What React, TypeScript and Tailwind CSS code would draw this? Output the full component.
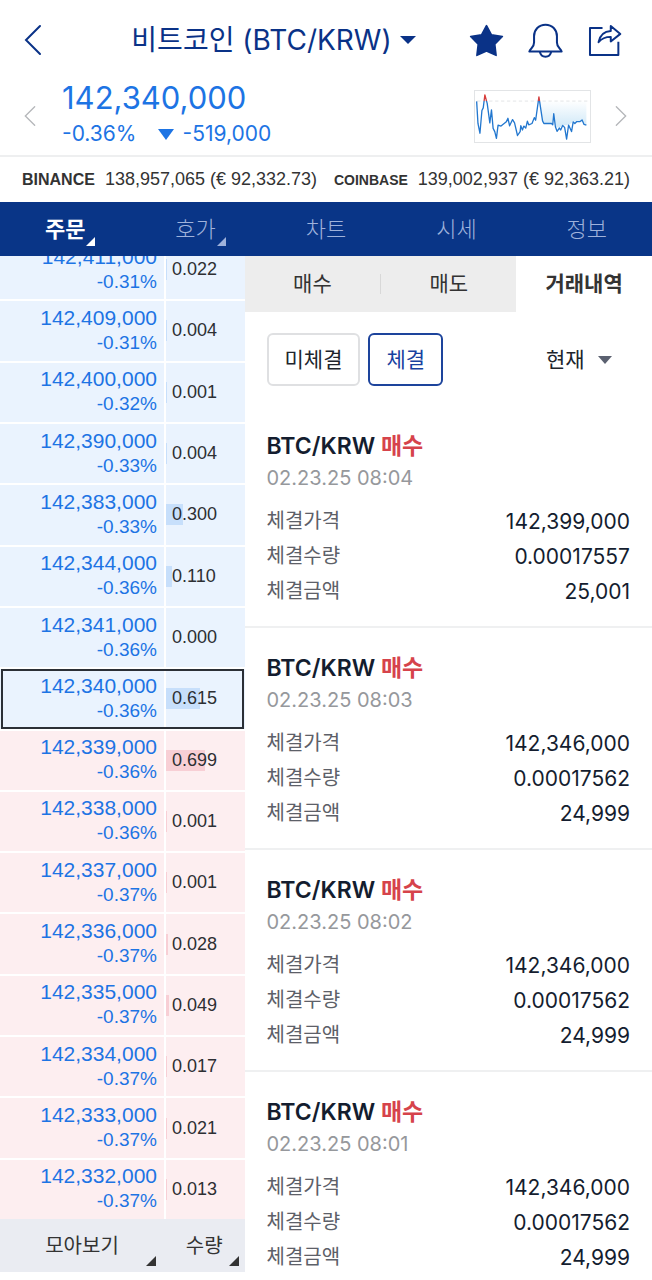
import React from 'react';
import clsx from 'clsx';

interface BookRow {
  price: string;
  change: string;
  qty: string;
  side: 'ask' | 'bid';
  current?: boolean;
}

const BOOK: BookRow[] = [
  { price: '142,411,000', change: '-0.31%', qty: '0.022', side: 'ask' },
  { price: '142,409,000', change: '-0.31%', qty: '0.004', side: 'ask' },
  { price: '142,400,000', change: '-0.32%', qty: '0.001', side: 'ask' },
  { price: '142,390,000', change: '-0.33%', qty: '0.004', side: 'ask' },
  { price: '142,383,000', change: '-0.33%', qty: '0.300', side: 'ask' },
  { price: '142,344,000', change: '-0.36%', qty: '0.110', side: 'ask' },
  { price: '142,341,000', change: '-0.36%', qty: '0.000', side: 'ask' },
  { price: '142,340,000', change: '-0.36%', qty: '0.615', side: 'ask', current: true },
  { price: '142,339,000', change: '-0.36%', qty: '0.699', side: 'bid' },
  { price: '142,338,000', change: '-0.36%', qty: '0.001', side: 'bid' },
  { price: '142,337,000', change: '-0.37%', qty: '0.001', side: 'bid' },
  { price: '142,336,000', change: '-0.37%', qty: '0.028', side: 'bid' },
  { price: '142,335,000', change: '-0.37%', qty: '0.049', side: 'bid' },
  { price: '142,334,000', change: '-0.37%', qty: '0.017', side: 'bid' },
  { price: '142,333,000', change: '-0.37%', qty: '0.021', side: 'bid' },
  { price: '142,332,000', change: '-0.37%', qty: '0.013', side: 'bid' },
];

const TRADES = [
  { time: '02.23.25 08:04', price: '142,399,000', amount: '0.00017557', total: '25,001' },
  { time: '02.23.25 08:03', price: '142,346,000', amount: '0.00017562', total: '24,999' },
  { time: '02.23.25 08:02', price: '142,346,000', amount: '0.00017562', total: '24,999' },
  { time: '02.23.25 08:01', price: '142,346,000', amount: '0.00017562', total: '24,999' },
];

const NAV = [
  { label: '주문', active: true, more: true },
  { label: '호가', more: true },
  { label: '차트' },
  { label: '시세' },
  { label: '정보' },
];

const Chevron = ({ flip, className }: { flip?: boolean; className: string }) => (
  <svg viewBox="0 0 18 32" fill="none" stroke="currentColor" strokeLinecap="round" className={className}>
    <path d={flip ? 'M2 2l14 14L2 30' : 'M16 2L2 16l14 14'} />
  </svg>
);

const Caret = ({ className }: { className: string }) => (
  <svg viewBox="0 0 16 8" fill="currentColor" preserveAspectRatio="none" className={className}>
    <path d="M0 0h16L8 8z" />
  </svg>
);

const Corner = ({ className }: { className: string }) => (
  <svg viewBox="0 0 9 9" fill="currentColor" className={clsx('absolute', className)}>
    <path d="M9 0v9H0z" />
  </svg>
);

const StarIcon = () => (
  <svg viewBox="0 0 104 100" fill="currentColor" stroke="currentColor" strokeWidth="5" strokeLinejoin="round" className="h-[33px] w-[35px]">
    <path d="M52 5l15 28 33 5-23 23 4 34-29-13-29 13 4-34L4 38l33-5z" />
  </svg>
);

const BellIcon = () => (
  <svg viewBox="0 0 104 104" fill="none" stroke="currentColor" strokeWidth="6" strokeLinejoin="round" className="size-[35px]">
    <path d="M52 5C32 5 18 20 18 39v19c0 9-3 13-8 18-3 3-5 6-6 9h96c-1-3-3-6-6-9-5-5-8-9-8-18V39C86 20 72 5 52 5z" />
    <path d="M35 85c2 10 8 15 17 15s15-5 17-15" />
  </svg>
);

const ShareIcon = () => (
  <svg viewBox="0 0 104 100" fill="none" stroke="currentColor" strokeWidth="6" strokeLinejoin="round" className="h-[33px] w-[35px]">
    <path d="M46 12H8v82h86V54" />
    <path d="M34 55C38 35 51 22 71 21V6l29 24-29 23V39c-16 0-28 5-37 16z" />
  </svg>
);

const MiniChart = () => (
  <svg viewBox="43 30 349 157" preserveAspectRatio="none" fill="none" className="h-[53px] w-[117px] border border-[#e2e4e6]">
    <defs>
      <linearGradient id="area" x1="0" y1="60" x2="0" y2="135" gradientUnits="userSpaceOnUse">
        <stop offset="0" stopColor="#fff" />
        <stop offset="1" stopColor="#d3eaf8" />
      </linearGradient>
      <linearGradient id="line" x1="0" y1="40" x2="0" y2="180" gradientUnits="userSpaceOnUse">
        <stop offset="0" stopColor="#e0362c" />
        <stop offset="0.15" stopColor="#c9424a" />
        <stop offset="0.16" stopColor="#2277cf" />
        <stop offset="1" stopColor="#2277cf" />
      </linearGradient>
    </defs>
    <path fill="url(#area)" d="M240 62L248 122 252 130 275 130 279 134 282 100 287 140 299 144 309 136 327 135 341 125 362 124 368 119 374 133 381 135V62z" />
    <path stroke="#d5d7da" strokeWidth="2" strokeDasharray="10 8" d="M50 61H384" />
    <path
      stroke="url(#line)"
      strokeWidth="4"
      strokeLinejoin="round"
      d="M48 62L52 130 58 160 64 90 68 82 73 42 80 68 88 128 93 88 98 145 103 155 108 176 113 135 122 138 138 125 143 114 148 137 157 118 163 128 172 167 180 155 182 137 187 150 191 138 197 144 202 123 206 134 216 130 223 112 227 120 237 48 248 122 252 130 275 130 279 134 282 100 287 140 292 154 299 144 303 150 309 136 315 142 321 178 327 135 336 155 341 125 346 130 352 124 362 124 368 119 374 133 381 135"
    />
  </svg>
);

const Header = () => (
  <header>
    <div className="flex h-20 items-center pl-6 pr-[30px] text-[#0a3287]">
      <button aria-label="뒤로">
        <Chevron className="h-8 w-[18px] stroke-2" />
      </button>
      <h1 className="flex-1 pl-9 text-center text-[28px]">
        <button className="inline-flex items-center gap-2">
          비트코인 (BTC/KRW)
          <Caret className="h-2 w-4" />
        </button>
      </h1>
      <div className="flex gap-6">
        <button aria-label="즐겨찾기"><StarIcon /></button>
        <button aria-label="알림"><BellIcon /></button>
        <button aria-label="공유"><ShareIcon /></button>
      </div>
    </div>
    <div className="flex h-[77px] items-center border-b-2 border-[#eeeff0] pr-[25px] pb-[3px] pl-6">
      <button aria-label="이전" className="text-[#b5b7ba]">
        <Chevron className="h-[22px] w-3 stroke-2" />
      </button>
      <div className="ml-[26px] flex-1 text-[#1d74e4]">
        <p className="text-[31px] leading-9">142,340,000</p>
        <p className="flex items-center text-[21px] leading-9">
          -0.36%
          <Caret className="ml-[22px] mr-2 h-[11px] w-4" />
          -519,000
        </p>
      </div>
      <MiniChart />
      <button aria-label="다음" className="ml-6 text-[#b5b7ba]">
        <Chevron flip className="h-[22px] w-3 stroke-2" />
      </button>
    </div>
    <div className="flex h-[45px] items-center justify-between px-[22px] font-['Liberation_Sans',sans-serif] text-[#333]">
      <p className="flex items-center gap-[10px] text-[18px]"><b className="text-base">BINANCE</b> 138,957,065 (€ 92,332.73)</p>
      <p className="flex items-center gap-[10px] text-[18px]"><b className="text-sm">COINBASE</b> 139,002,937 (€ 92,363.21)</p>
    </div>
  </header>
);

const Nav = () => (
  <nav className="grid h-[54px] grid-cols-5 bg-[#093587] text-[22px]">
    {NAV.map(({ label, active, more }) => (
      <button key={label} className={active ? 'font-bold text-white' : 'font-light text-[#9fb2db]'}>
        <span className="relative">
          {label}
          {more && <Corner className="-right-[10px] -bottom-1 size-[9px]" />}
        </span>
      </button>
    ))}
  </nav>
);

const OrderBook = () => (
  <aside className="flex w-3/8 flex-col pb-2">
    <div className="flex min-h-0 flex-1 flex-col overflow-hidden font-['Liberation_Sans',sans-serif]">
      {/* list is scrolled a little, so the first row is cut */}
      <ul className="-mt-[18px] flex flex-1 flex-col">
        {BOOK.map((row) => {
          const ask = row.side === 'ask';
          const qty = Number(row.qty);
          return (
            <li key={row.price} className="relative flex flex-1 gap-[2px] border-t-2 border-white">
              <div className={clsx('flex w-[164px] flex-col justify-center pr-[7px] text-right text-[#1d74e4]', ask ? 'bg-[#eaf3fe]' : 'bg-[#fdeef0]')}>
                <p className="text-[21px] leading-6">{row.price}</p>
                <p className="text-[19px] leading-[26px]">{row.change}</p>
              </div>
              <div className={clsx('relative flex flex-1 items-center pl-[6px]', ask ? 'bg-[#eaf3fe]' : 'bg-[#fdeef0]')}>
                {qty > 0 && (
                  <span
                    className={clsx('absolute left-0 h-[21px] min-w-px', ask ? 'bg-[#c7dffb]' : 'bg-[#f8cfd5]')}
                    style={{ width: Math.round(qty * 56) }}
                  />
                )}
                <span className="relative text-[18px] text-[#2d2f33]">{row.qty}</span>
              </div>
              {row.current && <span className="absolute inset-x-px inset-y-0 border-2 border-[#2b2f36]" />}
            </li>
          );
        })}
      </ul>
    </div>
    <div className="flex h-[53px] bg-[#eaecf2] text-[20px] text-[#333]">
      <button className="relative w-[164px]">
        모아보기
        <Corner className="right-2 bottom-[6px] size-[10px]" />
      </button>
      <button className="relative flex-1">
        수량
        <Corner className="right-[6px] bottom-[6px] size-[10px]" />
      </button>
    </div>
  </aside>
);

const TradeCard = ({ trade }: { trade: (typeof TRADES)[number] }) => (
  <li className="border-b-2 border-[#eff0f1] px-[22px] pt-[26px] pb-[17px]">
    <h2 className="text-[23px] leading-7 font-semibold text-[#141d2f]">
      BTC/KRW <span className="text-[#d6434b]">매수</span>
    </h2>
    <p className="mt-[6px] text-[20px] leading-6 text-[#96989c]">{trade.time}</p>
    <dl className="mt-[14px] grid grid-cols-[auto_1fr] text-[21px] leading-[35px] text-[#141d2f]">
      <dt className="text-[20px] text-[#5d6068]">체결가격</dt>
      <dd className="text-right">{trade.price}</dd>
      <dt className="text-[20px] text-[#5d6068]">체결수량</dt>
      <dd className="text-right">{trade.amount}</dd>
      <dt className="text-[20px] text-[#5d6068]">체결금액</dt>
      <dd className="text-right">{trade.total}</dd>
    </dl>
  </li>
);

const History = () => (
  <main className="flex min-w-0 flex-1 flex-col">
    <div className="grid h-14 shrink-0 grid-cols-3 bg-[#ededed] text-[21px] text-[#333]">
      <button>매수</button>
      <button className="flex items-center">
        <span className="h-5 w-px bg-[#d8d8d8]" />
        <span className="flex-1">매도</span>
      </button>
      <button className="bg-white font-bold">거래내역</button>
    </div>
    <div className="flex shrink-0 items-center gap-2 px-[22px] pt-[21px] pb-5 text-[21px] text-[#20242c]">
      <button className="h-[53px] rounded-md border-2 border-[#dfe0e2] px-4">미체결</button>
      <button className="h-[53px] rounded-md border-2 border-[#1d449c] px-4 text-[#1741a0]">체결</button>
      <label className="relative mr-[18px] ml-auto">
        <select aria-label="기간" className="w-[66px] appearance-none bg-transparent outline-none">
          <option>현재</option>
        </select>
        <Caret className="pointer-events-none absolute top-1/2 right-0 h-2 w-[14px] -translate-y-1/2 text-[#5b6170]" />
      </label>
    </div>
    <ul className="min-h-0 flex-1 overflow-hidden">
      {TRADES.map((trade) => (
        <TradeCard key={trade.time} trade={trade} />
      ))}
    </ul>
  </main>
);

export default function App() {
  return (
    <div className="flex h-screen flex-col overflow-hidden bg-white font-[Inter,'Noto_Sans_CJK_KR',sans-serif]">
      <Header />
      <Nav />
      <div className="flex min-h-0 flex-1">
        <OrderBook />
        <History />
      </div>
    </div>
  );
}
